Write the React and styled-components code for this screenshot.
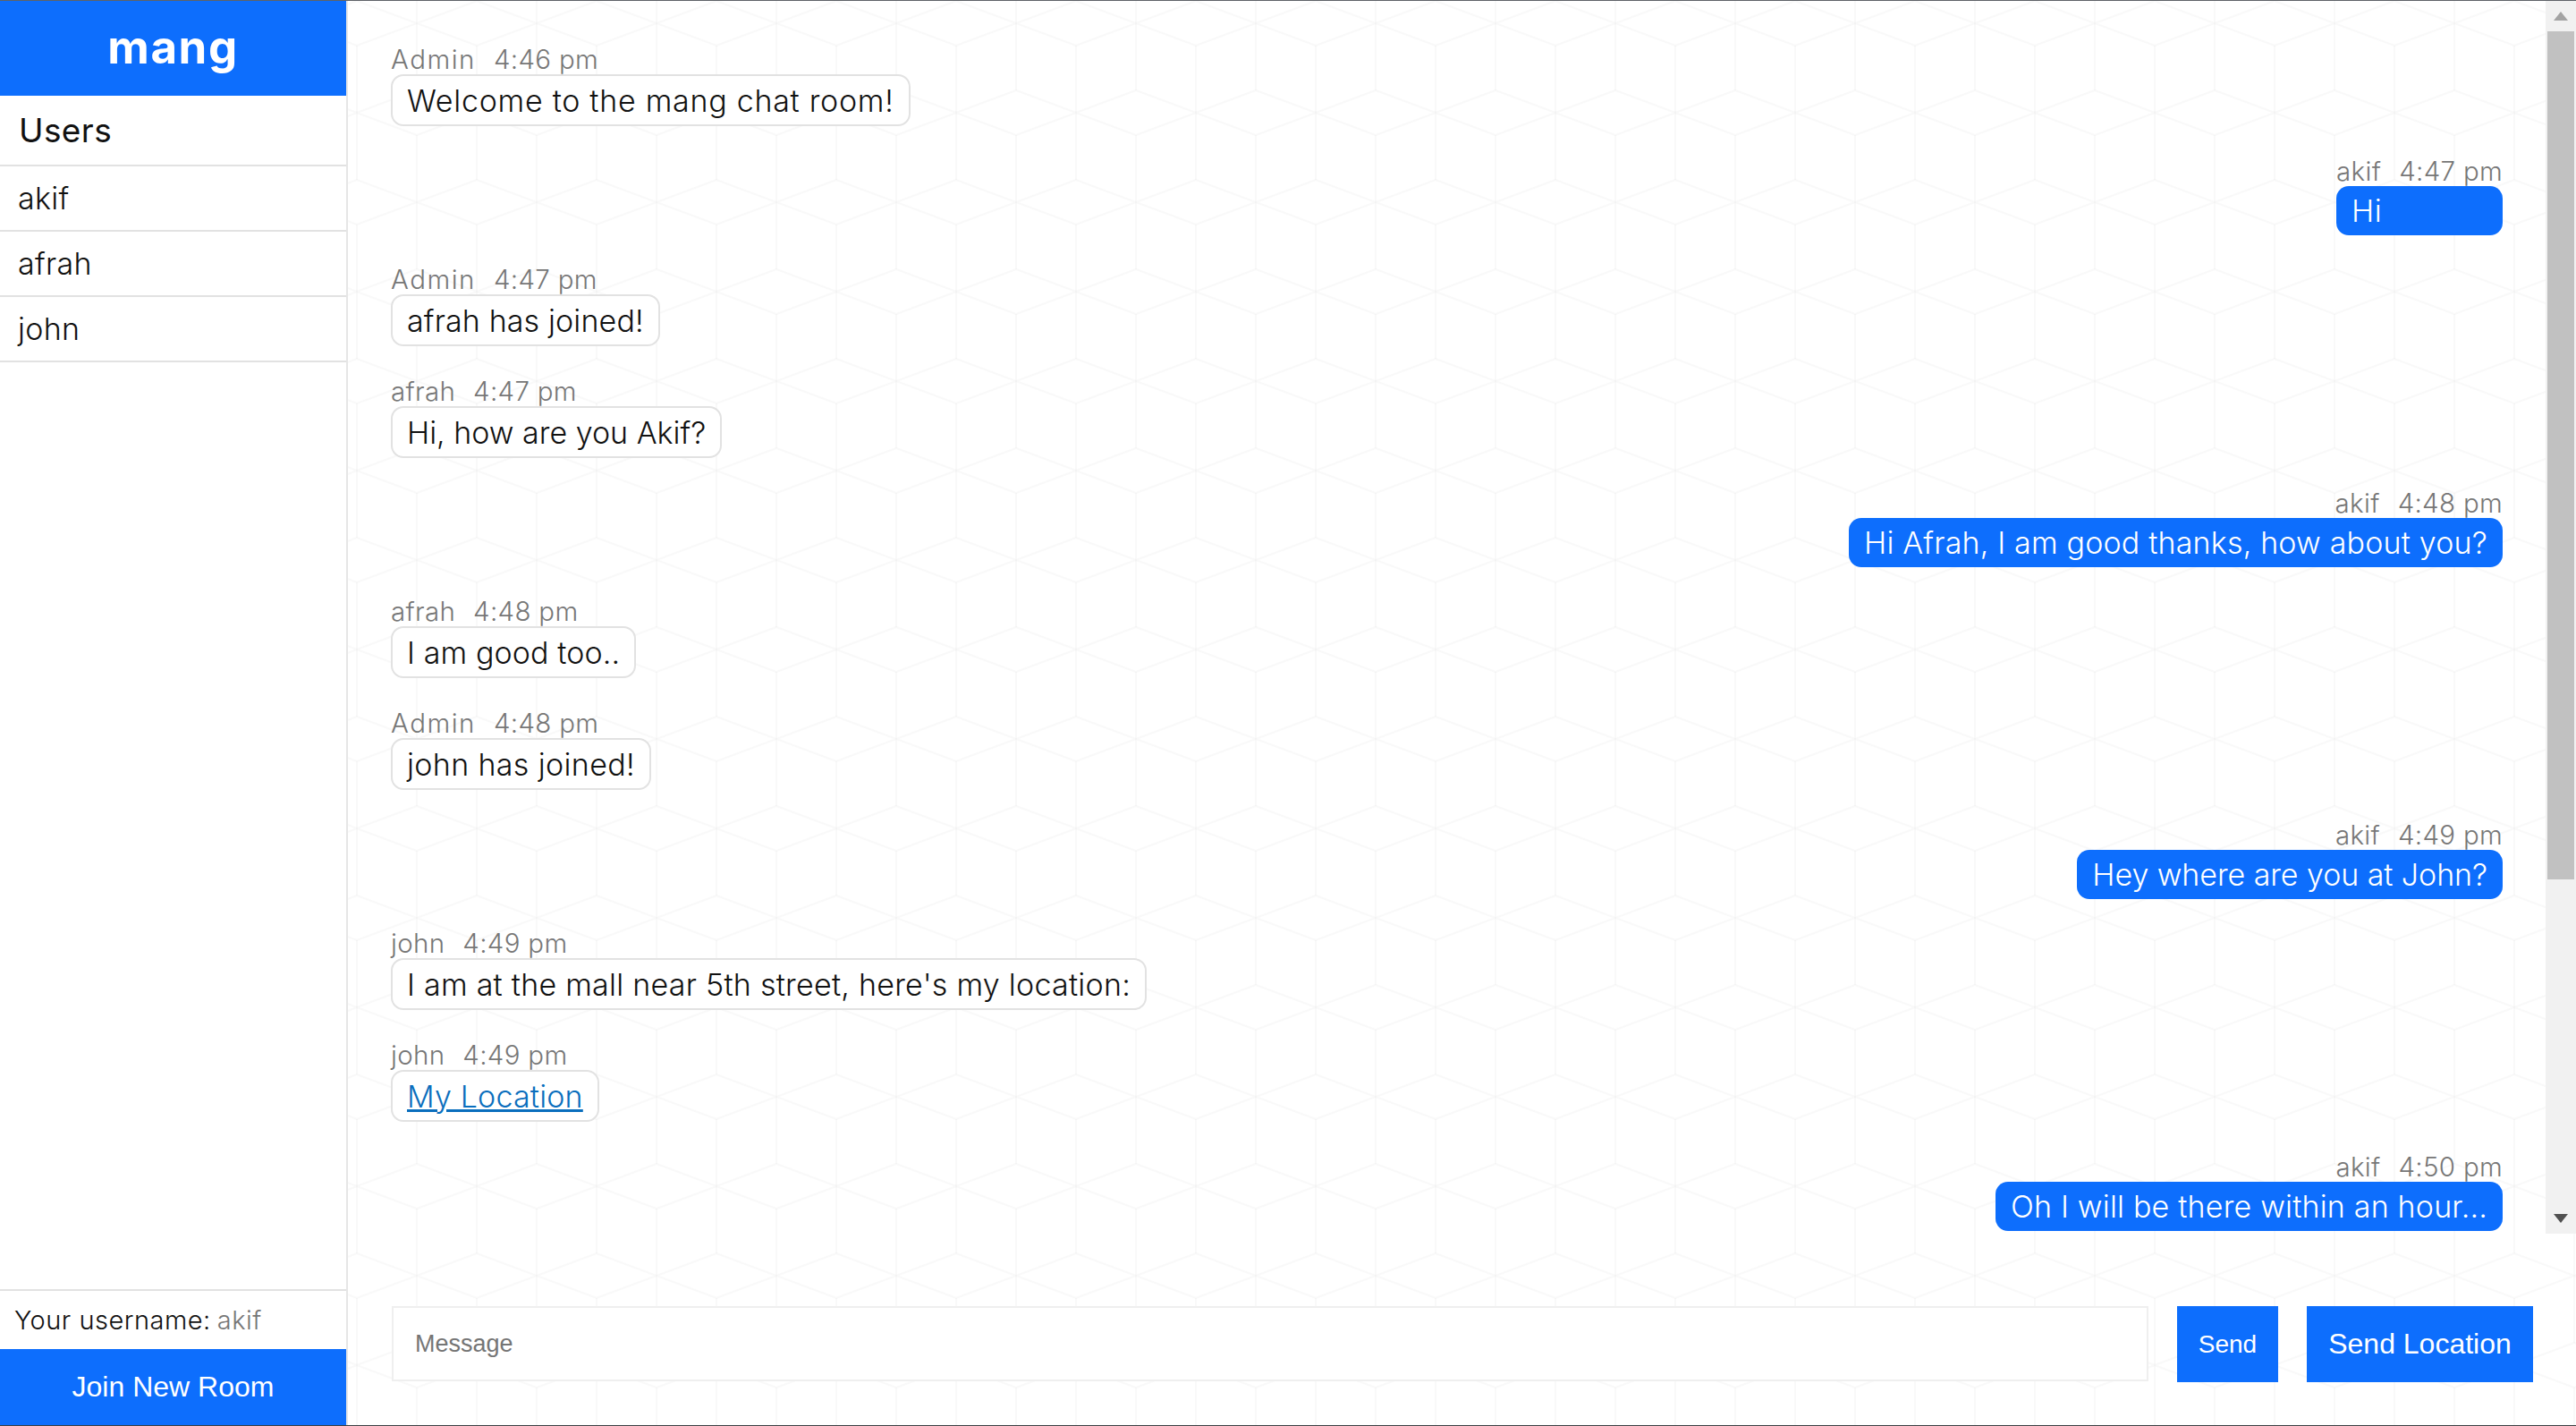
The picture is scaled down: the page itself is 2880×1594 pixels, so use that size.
import React from "react";
import styled, { createGlobalStyle } from "styled-components";

const tile = `<svg xmlns='http://www.w3.org/2000/svg' width='134' height='200' viewBox='0 0 134 200'><g fill='none' stroke='#000' stroke-opacity='0.022' stroke-width='2'><path d='M67 25V175M0 0V75M134 0V75M0 125V200M134 125V200'/><path d='M0 75L67 100L134 75M0 125L67 100L134 125'/><path d='M0 0L67 25L134 0M0 200L67 175L134 200'/></g></svg>`;

const Global = createGlobalStyle`
  html, body { margin: 0; padding: 0; height: 100%; background: #fff; overflow: hidden; }
  #root { height: 100%; }
  * { box-sizing: border-box; }
`;

const sans = `Inter, "Noto Sans", sans-serif`;
const blue = "#0d6efd";

const Page = styled.div`
  display: flex;
  height: 1594px;
  border-top: 1px solid #5f6368;
  border-bottom: 1px solid #3c4043;
  font-family: ${sans};
  font-weight: 300;
  color: #111;
`;

const Sidebar = styled.aside`
  width: 389px;
  flex: none;
  display: flex;
  flex-direction: column;
  background: #fff;
  border-right: 2px solid #e6e6e6;
`;

const Brand = styled.h1`
  margin: 0;
  height: 106px;
  display: flex;
  align-items: center;
  justify-content: center;
  background: ${blue};
  color: #fff;
  font-size: 51px;
  font-weight: 700;
  letter-spacing: 1.6px;
  padding-bottom: 4px;
`;

const SideTitle = styled.h2`
  margin: 0;
  height: 79px;
  padding-left: 21px;
  display: flex;
  align-items: center;
  border-bottom: 2px solid #e2e2e2;
  font-size: 37px;
  font-weight: 400;
  letter-spacing: 0.4px;
`;

const UserRow = styled.div`
  height: 73px;
  padding-left: 20px;
  display: flex;
  align-items: center;
  border-bottom: 2px solid #e2e2e2;
  font-size: 34px;
  letter-spacing: 0.3px;
`;

const Spacer = styled.div`
  flex: 1;
`;

const UsernameRow = styled.div`
  height: 67px;
  padding-left: 16px;
  display: flex;
  align-items: center;
  gap: 7px;
  border-top: 2px solid #e2e2e2;
  font-size: 29px;
  letter-spacing: 0.5px;
  white-space: nowrap;
`;

const Muted = styled.span`
  color: #777;
`;

const JoinButton = styled.button`
  height: 85px;
  border: 0;
  background: ${blue};
  color: #fff;
  font-family: "Liberation Sans", Arial, sans-serif;
  font-size: 32px;
`;

const Main = styled.main`
  flex: 1;
  min-width: 0;
  display: flex;
  flex-direction: column;
  background-color: #fff;
  background-image: url("data:image/svg+xml,${encodeURIComponent(tile)}");
  background-position: 76.7px 25px;
  background-size: 134px 200px;
`;

const ScrollRow = styled.div`
  height: 1378px;
  flex: none;
  display: flex;
`;

const MessageList = styled.div`
  flex: 1;
  min-width: 0;
  padding: 39px 48px 0 48px;
  display: flex;
  flex-direction: column;
  gap: 24px;
`;

const Message = styled.div`
  display: flex;
  flex-direction: column;
  align-items: ${(p) => (p.$mine ? "flex-end" : "flex-start")};
  margin-bottom: ${(p) => (p.$mine ? "-1px" : "0")};
`;

const Bubbled = styled.div`
  display: inline-flex;
  flex-direction: column;
  align-items: stretch;
`;

const Meta = styled.div`
  height: 43px;
  padding-top: 8px;
  display: flex;
  align-items: center;
  justify-content: ${(p) => (p.$mine ? "flex-end" : "flex-start")};
  gap: 20px;
  font-size: 29.5px;
  letter-spacing: 0.3px;
  color: #777;
  white-space: nowrap;
`;

const Sender = styled.span`
  letter-spacing: ${(p) => (p.$wide ? "1.5px" : "0.3px")};
`;

const Bubble = styled.div`
  height: ${(p) => (p.$mine ? "55px" : "58px")};
  padding: 0 ${(p) => (p.$mine ? "17px" : "16px")};
  display: flex;
  align-items: center;
  border-radius: 14px;
  border: ${(p) => (p.$mine ? "0" : "2px solid #e2e2e2")};
  background: ${(p) => (p.$mine ? blue : "#fff")};
  color: ${(p) => (p.$mine ? "#fff" : "#111")};
  font-size: 34px;
  letter-spacing: ${(p) => p.$track}px;
  white-space: nowrap;
`;

const MapLink = styled.a`
  color: #0a6ebd;
  text-decoration: underline;
`;

const Track = styled.div`
  width: 34px;
  flex: none;
  display: flex;
  flex-direction: column;
  background: #f1f1f1;
`;

const TrackButton = styled.div`
  height: 34px;
  flex: none;
  display: flex;
  align-items: center;
  justify-content: center;
`;

const Thumb = styled.div`
  height: 948px;
  margin: 0 2px 0 2px;
  flex: none;
  background: #c1c1c1;
`;

const TrackGap = styled.div`
  flex: 1;
`;

const Composer = styled.form`
  flex: 1;
  display: flex;
  align-items: flex-start;
  padding: 81px 48px 0 49px;
  gap: 32px;
  margin: 0;
`;

const MessageInput = styled.input`
  flex: 1;
  min-width: 0;
  height: 84px;
  padding: 0 24px;
  border: 2px solid #efefef;
  background: #fff;
  font-family: "Liberation Sans", Arial, sans-serif;
  font-size: 27px;
  &::placeholder { color: #757575; }
`;

const ActionButton = styled.button`
  height: 85px;
  width: ${(p) => p.$w}px;
  flex: none;
  border: 0;
  padding: 0;
  background: ${blue};
  color: #fff;
  font-family: "Liberation Sans", Arial, sans-serif;
  font-size: ${(p) => p.$size}px;
`;

const messages = [
  { who: "Admin", at: "4:46 pm", text: "Welcome to the mang chat room!", track: 0.72 },
  { who: "akif", at: "4:47 pm", text: "Hi", mine: true, track: 0.35 },
  { who: "Admin", at: "4:47 pm", text: "afrah has joined!", track: 0.13 },
  { who: "afrah", at: "4:47 pm", text: "Hi, how are you Akif?", track: 0 },
  { who: "akif", at: "4:48 pm", text: "Hi Afrah, I am good thanks, how about you?", mine: true, track: 0.18 },
  { who: "afrah", at: "4:48 pm", text: "I am good too..", track: 0.1 },
  { who: "Admin", at: "4:48 pm", text: "john has joined!", track: 0.35 },
  { who: "akif", at: "4:49 pm", text: "Hey where are you at John?", mine: true, track: -0.07 },
  { who: "john", at: "4:49 pm", text: "I am at the mall near 5th street, here's my location:", track: 0.25 },
  { who: "john", at: "4:49 pm", link: "My Location", track: 0.18 },
  { who: "akif", at: "4:50 pm", text: "Oh I will be there within an hour...", mine: true, track: 0.19 },
];

const Arrow = ({ up, color }) => (
  <svg width="16" height="10" viewBox="0 0 16 10">
    <path d={up ? "M8 0L16 10H0Z" : "M0 0H16L8 10Z"} fill={color} />
  </svg>
);

export default function App() {
  return (
    <>
      <Global />
      <Page>
        <Sidebar>
          <Brand>mang</Brand>
          <SideTitle>Users</SideTitle>
          {["akif", "afrah", "john"].map((u) => (
            <UserRow key={u}>{u}</UserRow>
          ))}
          <Spacer />
          <UsernameRow>
            Your username: <Muted>akif</Muted>
          </UsernameRow>
          <JoinButton type="button">Join New Room</JoinButton>
        </Sidebar>
        <Main>
          <ScrollRow>
            <MessageList>
              {messages.map((m, i) => (
                <Message key={i} $mine={m.mine}>
                  <Bubbled>
                    <Meta $mine={m.mine}>
                      <Sender $wide={m.who === "Admin"}>{m.who}</Sender>
                      <span>{m.at}</span>
                    </Meta>
                    <Bubble $mine={m.mine} $track={m.track}>
                      {m.link ? <MapLink href="#">{m.link}</MapLink> : m.text}
                    </Bubble>
                  </Bubbled>
                </Message>
              ))}
            </MessageList>
            <Track>
              <TrackButton><Arrow up color="#a3a3a3" /></TrackButton>
              <Thumb />
              <TrackGap />
              <TrackButton><Arrow color="#505050" /></TrackButton>
            </Track>
          </ScrollRow>
          <Composer>
            <MessageInput placeholder="Message" />
            <ActionButton type="button" $w={113} $size={28}>Send</ActionButton>
            <ActionButton type="button" $w={253} $size={32}>Send Location</ActionButton>
          </Composer>
        </Main>
      </Page>
    </>
  );
}
